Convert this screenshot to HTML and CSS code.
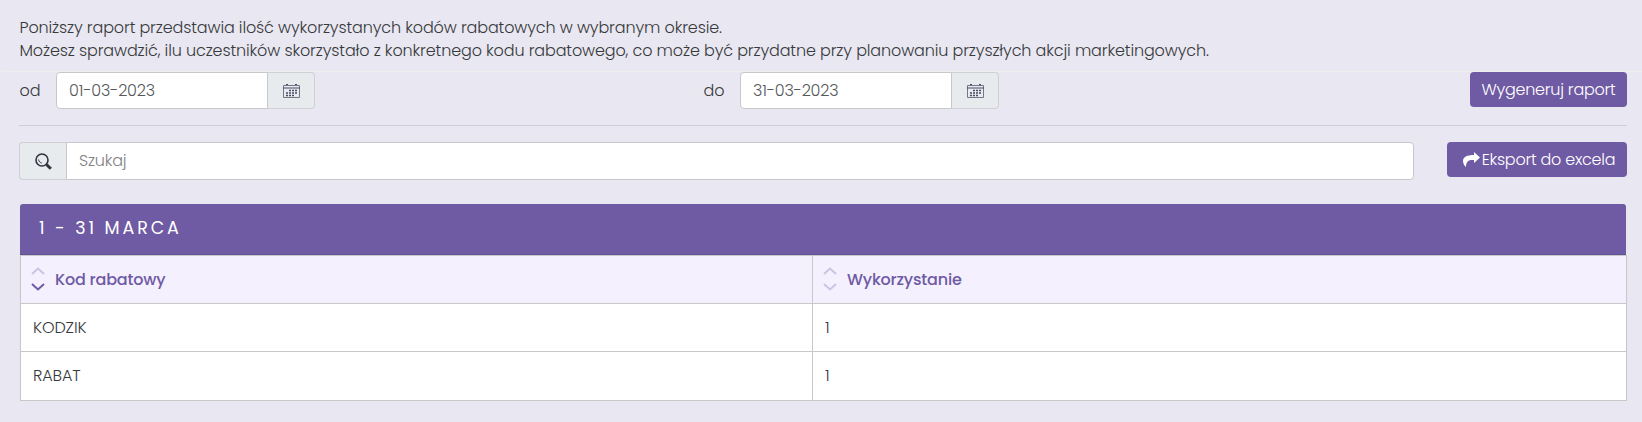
FILE: index.html
```html
<!DOCTYPE html>
<html lang="pl">
<head>
    <meta charset="UTF-8">
    <meta name="viewport" content="width=device-width, initial-scale=1.0">
    <title>Raport kodów rabatowych</title>
    <link rel="stylesheet" href="styles.css">
</head>
<body>
    <div class="report-intro">
        <p>Poniższy raport przedstawia ilość wykorzystanych kodów rabatowych w wybranym okresie.</p>
        <p>Możesz sprawdzić, ilu uczestników skorzystało z konkretnego kodu rabatowego, co może być przydatne przy planowaniu przyszłych akcji marketingowych.</p>
    </div>

    <form class="report-form">
        <div class="date-field">
            <label for="date_from">od</label>
            <div class="input-group">
                <input type="text" class="form-control" id="date_from" value="01-03-2023">
                <span class="input-addon">
                    <svg width="17" height="14" viewBox="0 0 17 14" fill="none">
                        <path d="M.5 1.5h16v12H.5z" stroke="#777587"/>
                        <path d="M0 4h17" stroke="#4b4968" stroke-width="1"/>
                        <path d="M3 .5h2M12 .5h2" stroke="#4b4968"/>
                        <path d="M6 6.500h8.500M3 9h11.500M3 11.500h8.500" stroke="#4b4968" stroke-width="1.500" stroke-dasharray="2 1"/>
                    </svg>
                </span>
            </div>
        </div>
        <div class="date-field">
            <label for="date_to">do</label>
            <div class="input-group">
                <input type="text" class="form-control" id="date_to" value="31-03-2023">
                <span class="input-addon">
                    <svg width="17" height="14" viewBox="0 0 17 14" fill="none">
                        <path d="M.5 1.5h16v12H.5z" stroke="#777587"/>
                        <path d="M0 4h17" stroke="#4b4968" stroke-width="1"/>
                        <path d="M3 .5h2M12 .5h2" stroke="#4b4968"/>
                        <path d="M6 6.500h8.500M3 9h11.500M3 11.500h8.500" stroke="#4b4968" stroke-width="1.500" stroke-dasharray="2 1"/>
                    </svg>
                </span>
            </div>
        </div>
        <button type="button" class="btn btn-generate">Wygeneruj raport</button>
    </form>

    <div class="toolbar">
        <div class="input-group search-group">
            <span class="input-addon">
                <svg width="17" height="17" viewBox="0 0 17 17" fill="none">
                    <circle cx="7" cy="7" r="6" stroke="#34323f" stroke-width="1.6"/>
                    <path d="M3.6 6.5c.2 2 1.4 3.2 3.2 3.5" stroke="#34323f"/>
                    <path d="M11.5 11.5l4.3 4.3" stroke="#34323f" stroke-width="3"/>
                </svg>
            </span>
            <input type="text" class="form-control" placeholder="Szukaj">
        </div>
        <button type="button" class="btn btn-export">
            <svg width="17" height="15" viewBox="0 0 17 15">
                <path d="M11 0l6 5.500-6 5.500V8C6 7.600 3 9 3 15 1.500 14 0 11.500 0 9c0-4 4-6 11-6z" fill="#fff"/>
            </svg>
            <span>Eksport do excela</span>
        </button>
    </div>

    <div class="panel">
        <div class="panel-title">1 - 31 MARCA</div>
        <table class="report-table">
            <thead>
                <tr>
                    <th>
                        <div class="sortable sorted-desc">
                            <svg width="14" height="24" viewBox="0 0 14 24" fill="none" stroke-width="2">
                                <path class="arrow-up" d="M1 7l6-5.500L13 7"/>
                                <path class="arrow-down" d="M1 17l6 5.500L13 17"/>
                            </svg>
                            <span>Kod rabatowy</span>
                        </div>
                    </th>
                    <th>
                        <div class="sortable">
                            <svg width="14" height="24" viewBox="0 0 14 24" fill="none" stroke-width="2">
                                <path class="arrow-up" d="M1 7l6-5.500L13 7"/>
                                <path class="arrow-down" d="M1 17l6 5.500L13 17"/>
                            </svg>
                            <span>Wykorzystanie</span>
                        </div>
                    </th>
                </tr>
            </thead>
            <tbody>
                <tr>
                    <td>KODZIK</td>
                    <td>1</td>
                </tr>
                <tr>
                    <td>RABAT</td>
                    <td>1</td>
                </tr>
            </tbody>
        </table>
    </div>
</body>
</html>
```
FILE: styles.css
```css
* {
    box-sizing: border-box;
}
html, body {
    margin: 0;
    padding: 0;
}
body {
    font-family: Poppins, Inter, sans-serif;
    font-size: 16px;
    font-weight: 300;
    line-height: 23px;
    letter-spacing: -0.128px;
    color: #373a3c;
    background-color: #e9e7f1;
}
input, button {
    font: inherit;
    letter-spacing: inherit;
}
.report-intro {
    height: 72px;
    margin-left: 2px;
    padding: 16px 0 0 17.5px;
    border-bottom: 1px solid #eeedf0;
}
.report-intro p {
    margin: 0;
    white-space: nowrap;
}

/* Date range */
.report-form {
    display: grid;
    grid-template-columns: 684px 1fr auto;
    align-items: start;
    height: 54px;
    margin: 0 15px 0 19px;
    border-bottom: 1px solid #cfcdd8;
}
.date-field {
    display: flex;
    align-items: center;
}
.date-field label {
    width: 37px;
    padding-left: 0.5px;
}
.date-field .input-group {
    width: 259px;
}
.input-group {
    display: flex;
    height: 37px;
}
.form-control {
    flex: 1;
    min-width: 0;
    padding: 0 12px;
    letter-spacing: -0.2px;
    color: #55595c;
    background-color: #fff;
    border: 1px solid #c8c8ca;
    border-radius: 4px;
}
.form-control::placeholder {
    color: #818286;
    opacity: 1;
}
.input-addon {
    display: flex;
    align-items: center;
    justify-content: center;
    width: 47px;
    background-color: #e8ebee;
    border: 1px solid #d0cfd5;
    border-radius: 4px;
}
.date-field .form-control {
    border-top-right-radius: 0;
    border-bottom-right-radius: 0;
}
.date-field .input-addon {
    border-left: 0;
    border-top-left-radius: 0;
    border-bottom-left-radius: 0;
}
.btn {
    display: flex;
    align-items: center;
    justify-content: center;
    height: 35px;
    padding: 0;
    letter-spacing: -0.25px;
    color: #fff;
    background-color: #6f5aa4;
    border: 0;
    border-radius: 4px;
    white-space: nowrap;
}
.btn-generate {
    width: 157px;
}

/* Search and export */
.toolbar {
    display: flex;
    gap: 33px;
    margin: 16px 15px 24px 19px;
}
.search-group {
    flex: 1;
    height: 38px;
}
.search-group .input-addon {
    border-right: 0;
    border-top-right-radius: 0;
    border-bottom-right-radius: 0;
}
.search-group .form-control {
    padding-bottom: 2px;
    border-top-left-radius: 0;
    border-bottom-left-radius: 0;
}
.btn-export {
    gap: 2px;
    width: 180px;
    padding-left: 4px;
}

/* Results */
.panel {
    margin: 0 15px 0 20px;
    border-radius: 3px;
    box-shadow: 0 1px 1px rgba(0, 0, 0, 0.1);
}
.panel-title {
    height: 51px;
    margin-right: 1px;
    padding: 0 19px;
    font-size: 17.5px;
    font-weight: 400;
    line-height: 49px;
    letter-spacing: 2.9px;
    color: #fff;
    background-color: #6f5aa4;
    border-bottom: 1px solid #615094;
    border-radius: 3px 3px 0 0;
}
.report-table {
    width: 100%;
    table-layout: fixed;
    border-collapse: collapse;
    background-color: #fff;
}
.report-table th,
.report-table td {
    height: 48px;
    padding: 0 12px;
    text-align: left;
    border: 1px solid #c8c8c8;
}
.report-table tr:last-child td {
    height: 49px;
    padding-bottom: 2px;
}
.report-table th:first-child {
    width: 792px;
}
.report-table tr:last-child th {
    padding: 0 10px;
    font-weight: 500;
    letter-spacing: -0.2px;
    color: #6f5aa4;
    background-color: #f4f0fe;
}
.sortable {
    display: flex;
    align-items: center;
    gap: 10px;
}
.sortable svg {
    margin-bottom: 2px;
    stroke: #c9c5e3;
}
.sorted-desc .arrow-down {
    stroke: #6f5aa4;
}
```
